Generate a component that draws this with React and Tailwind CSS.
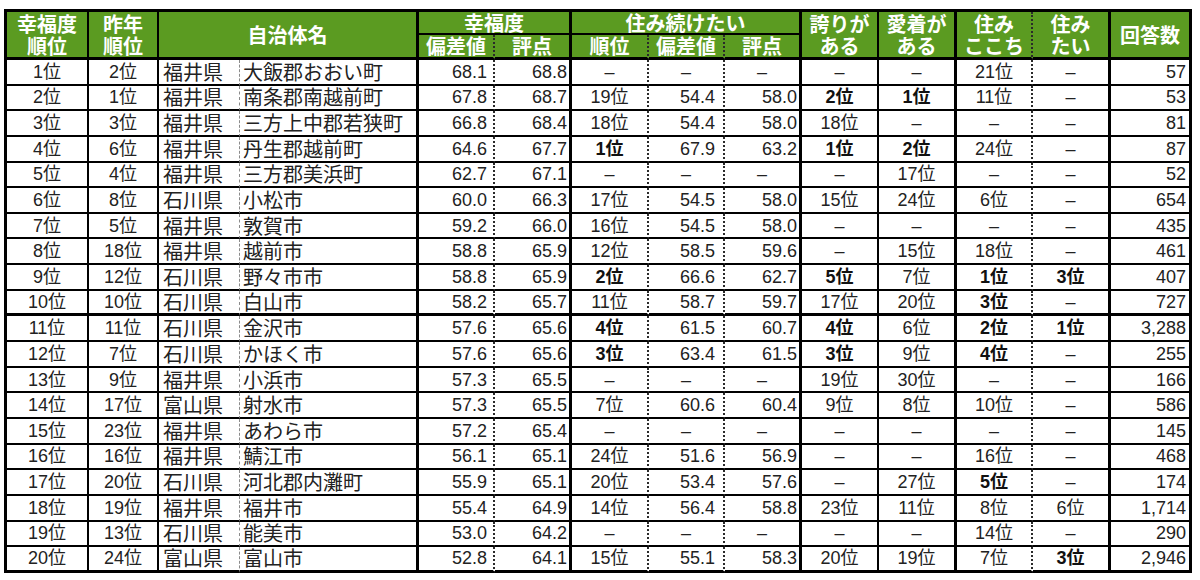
import React from "react";

const DOT = "border-r-2 border-r-[#2a2a2a] [border-right-style:dotted]";
const R = [
  "border-r-2 border-r-black",
  "border-r-2 border-r-black",
  "border-r border-r-[#8a8a8a] [border-right-style:dashed]",
  "border-r-[3px] border-r-black",
  DOT,
  "border-r-[3px] border-r-black",
  DOT,
  DOT,
  "border-r-[3px] border-r-black",
  "border-r-2 border-r-black",
  "border-r-[3px] border-r-black",
  DOT,
  "border-r-[3px] border-r-black",
  "border-r-[3px] border-r-black",
];

const A = [
  "justify-center",
  "justify-center",
  "justify-start pl-1 text-[20px] font-['Noto_Sans_CJK_JP',sans-serif]",
  "justify-start pl-[3px] text-[20px] font-['Noto_Sans_CJK_JP',sans-serif]",
  "justify-end pr-[6px]",
  "justify-end pr-[2px]",
  "justify-center",
  "justify-end pr-[8px]",
  "justify-end pr-[2px]",
  "justify-center",
  "justify-center",
  "justify-center",
  "justify-center",
  "justify-end pr-[3px]",
];

const rows = [
  ["1位", "2位", "福井県", "大飯郡おおい町", "68.1", "68.8", "-", "-", "-", "-", "-", "21位", "-", "57"],
  ["2位", "1位", "福井県", "南条郡南越前町", "67.8", "68.7", "19位", "54.4", "58.0", "*2位", "*1位", "11位", "-", "53"],
  ["3位", "3位", "福井県", "三方上中郡若狭町", "66.8", "68.4", "18位", "54.4", "58.0", "18位", "-", "-", "-", "81"],
  ["4位", "6位", "福井県", "丹生郡越前町", "64.6", "67.7", "*1位", "67.9", "63.2", "*1位", "*2位", "24位", "-", "87"],
  ["5位", "4位", "福井県", "三方郡美浜町", "62.7", "67.1", "-", "-", "-", "-", "17位", "-", "-", "52"],
  ["6位", "8位", "石川県", "小松市", "60.0", "66.3", "17位", "54.5", "58.0", "15位", "24位", "6位", "-", "654"],
  ["7位", "5位", "福井県", "敦賀市", "59.2", "66.0", "16位", "54.5", "58.0", "-", "-", "-", "-", "435"],
  ["8位", "18位", "福井県", "越前市", "58.8", "65.9", "12位", "58.5", "59.6", "-", "15位", "18位", "-", "461"],
  ["9位", "12位", "石川県", "野々市市", "58.8", "65.9", "*2位", "66.6", "62.7", "*5位", "7位", "*1位", "*3位", "407"],
  ["10位", "10位", "石川県", "白山市", "58.2", "65.7", "11位", "58.7", "59.7", "17位", "20位", "*3位", "-", "727"],
  ["11位", "11位", "石川県", "金沢市", "57.6", "65.6", "*4位", "61.5", "60.7", "*4位", "6位", "*2位", "*1位", "3,288"],
  ["12位", "7位", "石川県", "かほく市", "57.6", "65.6", "*3位", "63.4", "61.5", "*3位", "9位", "*4位", "-", "255"],
  ["13位", "9位", "福井県", "小浜市", "57.3", "65.5", "-", "-", "-", "19位", "30位", "-", "-", "166"],
  ["14位", "17位", "富山県", "射水市", "57.3", "65.5", "7位", "60.6", "60.4", "9位", "8位", "10位", "-", "586"],
  ["15位", "23位", "福井県", "あわら市", "57.2", "65.4", "-", "-", "-", "-", "-", "-", "-", "145"],
  ["16位", "16位", "福井県", "鯖江市", "56.1", "65.1", "24位", "51.6", "56.9", "-", "-", "16位", "-", "468"],
  ["17位", "20位", "石川県", "河北郡内灘町", "55.9", "65.1", "20位", "53.4", "57.6", "-", "27位", "*5位", "-", "174"],
  ["18位", "19位", "福井県", "福井市", "55.4", "64.9", "14位", "56.4", "58.8", "23位", "11位", "8位", "6位", "1,714"],
  ["19位", "13位", "石川県", "能美市", "53.0", "64.2", "-", "-", "-", "-", "-", "14位", "-", "290"],
  ["20位", "24位", "富山県", "富山市", "52.8", "64.1", "15位", "55.1", "58.3", "20位", "19位", "7位", "*3位", "2,946"],
];

const H = "flex flex-col items-center justify-center text-center bg-[#5b9b21] text-white font-bold text-[20px] leading-[22px] font-['Noto_Sans_CJK_JP',sans-serif]";

function Hd({ cls, lines }) {
  return (
    <div className={`${H} ${cls}`}>
      {lines.map((l) => (
        <span key={l} className="block h-[22px] leading-[22px]">
          {l}
        </span>
      ))}
    </div>
  );
}

export default function App() {
  return (
    <div className="w-[1200px] h-[580px] bg-white pt-[9px] pl-[4px] overflow-hidden">
      <div className="grid w-[1188px] grid-cols-[82px_70px_81px_179px_76px_77px_77px_76px_77px_77px_78px_76px_78px_81px] grid-rows-[23px_25px_repeat(20,25.65px)] border-l-[3px] border-t-[3px] border-black font-['Liberation_Sans','Noto_Sans_CJK_JP',sans-serif] text-[18px] text-[#222]">
        {/* header row 1 */}
        <Hd cls={`row-span-2 border-b-[3px] border-b-black ${R[0]}`} lines={["幸福度", "順位"]} />
        <Hd cls={`row-span-2 border-b-[3px] border-b-black ${R[1]}`} lines={["昨年", "順位"]} />
        <Hd cls={`col-span-2 row-span-2 border-b-[3px] border-b-black ${R[3]}`} lines={["自治体名"]} />
        <Hd cls={`col-span-2 border-b-2 border-b-black ${R[5]}`} lines={["幸福度"]} />
        <Hd cls={`col-span-3 border-b-2 border-b-black ${R[8]}`} lines={["住み続けたい"]} />
        <Hd cls={`row-span-2 border-b-[3px] border-b-black ${R[9]}`} lines={["誇りが", "ある"]} />
        <Hd cls={`row-span-2 border-b-[3px] border-b-black ${R[10]}`} lines={["愛着が", "ある"]} />
        <Hd cls={`row-span-2 border-b-[3px] border-b-black ${R[11]}`} lines={["住み", "ここち"]} />
        <Hd cls={`row-span-2 border-b-[3px] border-b-black ${R[12]}`} lines={["住み", "たい"]} />
        <Hd cls={`row-span-2 border-b-[3px] border-b-black ${R[13]}`} lines={["回答数"]} />
        {/* header row 2 */}
        <Hd cls={`border-b-[3px] border-b-black ${R[4]}`} lines={["偏差値"]} />
        <Hd cls={`border-b-[3px] border-b-black ${R[5]}`} lines={["評点"]} />
        <Hd cls={`border-b-[3px] border-b-black ${R[6]}`} lines={["順位"]} />
        <Hd cls={`border-b-[3px] border-b-black ${R[7]}`} lines={["偏差値"]} />
        <Hd cls={`border-b-[3px] border-b-black ${R[8]}`} lines={["評点"]} />
        {/* body */}
        {rows.map((row, ri) =>
          row.map((v, ci) => {
            const bold = v.startsWith("*");
            const text = bold ? v.slice(1) : v;
            const dash = text === "-";
            const bottom =
              ri === 9 || ri === 19 ? "border-b-[3px] border-b-black" : "border-b-2 border-b-black";
            const align = dash ? "justify-center" : A[ci];
            return (
              <div
                key={`${ri}-${ci}`}
                className={`flex items-center leading-[22px] whitespace-nowrap ${bottom} ${R[ci]} ${align} ${bold ? "font-bold text-[#111]" : ""}`}
              >
                {dash ? "–" : text}
              </div>
            );
          })
        )}
      </div>
    </div>
  );
}
